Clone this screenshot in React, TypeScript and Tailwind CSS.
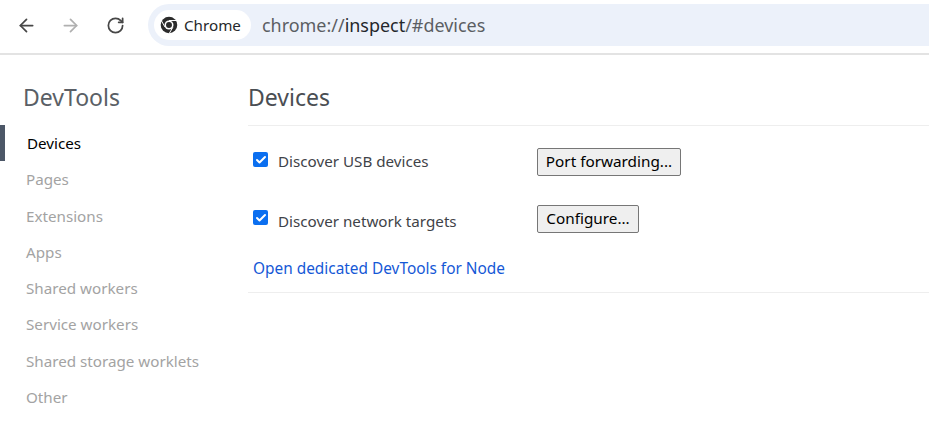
import React from 'react';
import { ArrowLeft, ArrowRight, RotateCw, Check } from 'lucide-react';

const font = "font-['Noto_Sans','Open_Sans',sans-serif]";

const navItems = ['Pages', 'Extensions', 'Apps', 'Shared workers', 'Service workers', 'Shared storage worklets', 'Other'];

const ChromeLogo = () => (
  <svg viewBox="0 0 20 20" className="w-[18px] h-[18px]">
    <circle cx="10" cy="10" r="9.2" fill="#2b2b2b" />
    <circle cx="10" cy="10" r="5" fill="#fff" />
    <circle cx="10" cy="10" r="3.3" fill="#2b2b2b" />
    <path d="M10 5h8.4M5.7 12.5 1.5 5.2M14.3 12.5 10 19.8" stroke="#fff" strokeWidth="1.1" fill="none" />
  </svg>
);

const Option = ({ label, button, btnClass, labelClass }: { label: string; button: string; btnClass: string; labelClass: string }) => (
  <div className="flex items-center h-[29px]">
    <div className="w-[15px] h-[15px] rounded-[2px] bg-[#0b6ff0] flex items-center justify-center ml-[5px] -mt-[4px]">
      <Check className="w-3 h-3 text-white" strokeWidth={4} />
    </div>
    <span className={`ml-[10px] w-[259px] text-[15.2px] text-[#3f4348] ${labelClass}`}>{label}</span>
    <button className={`h-[28px] border border-[#767676] rounded-[2px] bg-[#efefef] text-[15.3px] text-black flex items-center justify-center ${btnClass}`}>
      {button}
    </button>
  </div>
);

export default function App() {
  return (
    <div className={`w-[929px] h-[427px] bg-white overflow-hidden ${font}`}>
      {/* Barre du navigateur */}
      <div className="h-[55px] border-b-2 border-[#e3e3e3] flex items-start pt-[4px]">
        <div className="flex items-center h-[42px] pl-[16px] w-[148px]">
          <ArrowLeft className="w-[21px] h-[21px] text-[#474747]" strokeWidth={2} />
          <ArrowRight className="w-[21px] h-[21px] text-[#b0b0b0] ml-[23px]" strokeWidth={2} />
          <RotateCw className="w-[19px] h-[19px] text-[#474747] ml-[25px]" strokeWidth={2.2} />
        </div>
        <div className="flex-1 h-[42px] bg-[#ecf1fa] rounded-l-[21px] flex items-center pl-[6px]">
          <div className="h-[30px] w-[97px] bg-white rounded-[15px] flex items-center pl-[6px] gap-[6px]">
            <ChromeLogo />
            <span className="text-[15.2px] text-[#26282b]">Chrome</span>
          </div>
          <span className="ml-[11px] text-[17.95px] text-[#5b5e63]">
            chrome://<span className="text-[#24272b]">inspect</span>/#devices
          </span>
        </div>
      </div>

      <div className="flex">
        {/* Menu latéral */}
        <div className="w-[248px] shrink-0">
          <h1 className="text-[23px] leading-[30px] text-[#5a5f66] pl-[23px] mt-[27px]">DevTools</h1>
          <div className="mt-[13px] flex flex-col">
            <div className="h-[36px] border-l-[5px] border-[#4c5767] pl-[22px] flex items-center text-[15.2px] text-black">
              <span className="pt-[1px]">Devices</span>
            </div>
            {navItems.map((item) => (
              <div key={item} className="h-[36.3px] pl-[26px] pt-[1px] flex items-center text-[15.2px] text-[#a3a3a3]">
                {item}
              </div>
            ))}
          </div>
        </div>

        {/* Contenu */}
        <div className="flex-1">
          <div className="h-[71px] border-b border-[#eeeeee] flex items-end pb-[13px] text-[23px] text-[#4a4e53]">
            <span className="leading-[30px]">Devices</span>
          </div>
          <div className="h-[167px] border-b border-[#eeeeee]">
            <div className="pt-[21px] flex flex-col gap-[29px]">
              <Option label="Discover USB devices" button="Port forwarding..." btnClass="w-[144px]" labelClass="pb-[1px]" />
              <Option label="Discover network targets" button="Configure..." btnClass="w-[102px] mb-[2px]" labelClass="pt-[3px]" />
            </div>
            <a className="block mt-[23px] ml-[5px] text-[15.4px] text-[#1558d6]">Open dedicated DevTools for Node</a>
          </div>
        </div>
      </div>
    </div>
  );
}
